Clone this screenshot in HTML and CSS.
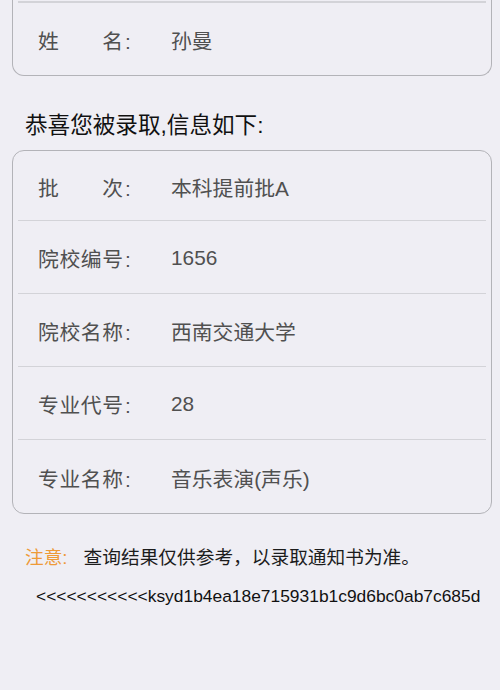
FILE: index.html
```html
<!DOCTYPE html>
<html>
<head>
  <meta charset="utf-8">
  <link rel="stylesheet" href="styles.css">
</head>

<body>
  <div class="card card-cut">
    <div class="row">
      <div class="key"><span class="name">姓名</span><span class="colon">:</span></div>
      <div class="value">孙曼</div>
    </div>
  </div>

  <h2 class="title">恭喜您被录取,信息如下:</h2>

  <div class="card">
    <div class="row first">
      <div class="key"><span class="name">批次</span><span class="colon">:</span></div>
      <div class="value">本科提前批A</div>
    </div>
    <div class="row">
      <div class="key"><span class="name">院校编号</span><span class="colon">:</span></div>
      <div class="value">1656</div>
    </div>
    <div class="row">
      <div class="key"><span class="name">院校名称</span><span class="colon">:</span></div>
      <div class="value">西南交通大学</div>
    </div>
    <div class="row">
      <div class="key"><span class="name">专业代号</span><span class="colon">:</span></div>
      <div class="value">28</div>
    </div>
    <div class="row last">
      <div class="key"><span class="name">专业名称</span><span class="colon">:</span></div>
      <div class="value">音乐表演(声乐)</div>
    </div>
  </div>

  <p class="notice"><span class="notice-tag">注意:</span>查询结果仅供参考，以录取通知书为准。</p>
  <p class="hash">&lt;&lt;&lt;&lt;&lt;&lt;&lt;&lt;&lt;&lt;&lt;ksyd1b4ea18e715931b1c9d6bc0ab7c685d</p>
</body>
</html>
```

FILE: styles.css
```css
body {
  margin: 0;
  padding: 0 8px 0 12px;
  height: 690px;
  overflow: hidden;
  background: #efeef4;
  font-family: "Liberation Sans", "Noto Sans CJK SC", sans-serif;
  color: #222;
}

.card {
  border: 1px solid #b3b3b8;
  border-radius: 12px;
  margin: 0;
}

.card-cut {
  border-top: none;
  border-top-left-radius: 0;
  border-top-right-radius: 0;
  padding-top: 1px;
}

.row {
  display: flex;
  align-items: center;
  height: 73px;
  margin: 0 5px;
  padding: 2px 0 0 20px;
  box-sizing: border-box;
  border-top: 1px solid #d3d3d8;
  font-size: 20.8px;
  color: #505050;
}

.card-cut .row {
  height: 74px;
  border-top-width: 2px;
}

.row.first {
  border-top: none;
  height: 69px;
  padding-top: 3px;
}

.row.last {
  height: 74px;
}

.key {
  display: flex;
  align-items: baseline;
  width: 133px;
  flex-shrink: 0;
}

.name {
  width: 85px;
  text-align: justify;
  text-align-last: justify;
}

.colon {
  margin-left: 2px;
}

.title {
  margin: 0;
  height: 74px;
  display: flex;
  align-items: center;
  padding: 21px 0 0 13px;
  box-sizing: border-box;
  font-size: 22.6px;
  font-weight: normal;
  color: #111;
}

.notice {
  margin: 31px 0 0 13px;
  font-size: 18.7px;
  line-height: 26px;
  color: #1c1c1c;
}

.notice-tag {
  color: #ee9a38;
  margin-right: 16px;
}

.hash {
  margin: 13px 0 0 24px;
  font-size: 17.4px;
  line-height: 24px;
  color: #111;
  white-space: nowrap;
}
```
